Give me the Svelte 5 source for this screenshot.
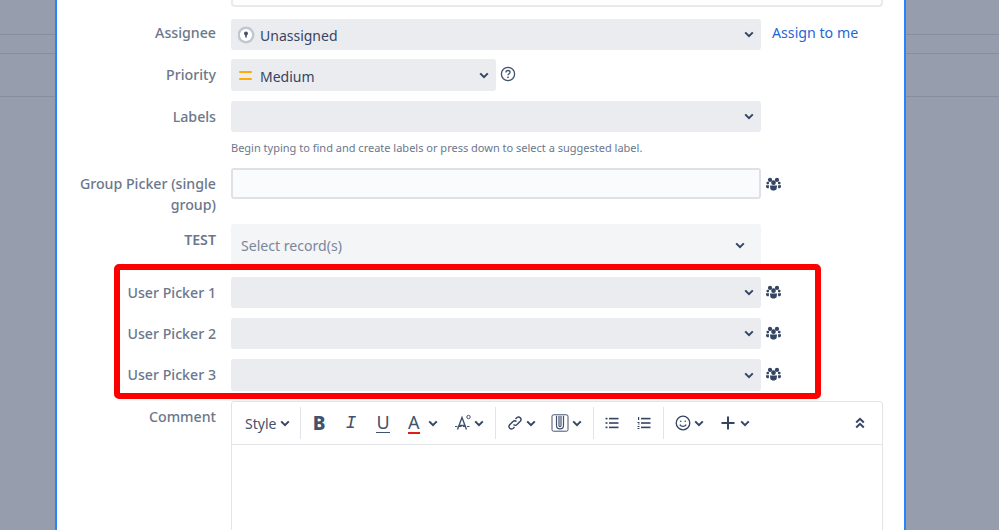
<script>
  const pickers = ["User Picker 1", "User Picker 2", "User Picker 3"];
</script>

{#snippet chevron()}
  <svg class="chev" viewBox="0 0 10 7" width="10" height="7"><path d="M1.200 1.400 5 5.200l3.800-3.800" fill="none" stroke="#344563" stroke-width="2" /></svg>
{/snippet}

{#snippet people()}
  <svg class="people" viewBox="0 0 16 14" width="15" height="14">
    <g fill="#344563">
      <circle cx="4.300" cy="2.600" r="2.300" />
      <circle cx="11.700" cy="2.600" r="2.300" />
      <circle cx="8" cy="5.600" r="2.500" />
      <circle cx="1.900" cy="6" r="1.500" />
      <circle cx="14.100" cy="6" r="1.500" />
      <path d="M0 8.200h3.200l-.2 3.400H1.200C.4 11.400-.1 10.400 0 8.200ZM16 8.200h-3.200l.2 3.400h1.800c.8-.2 1.300-1.200 1.200-3.400ZM4.200 8.700h7.600l-.5 3.600c-.4 1-1.600 1.600-3.300 1.600s-2.900-.6-3.300-1.600Z" />
    </g>
  </svg>
{/snippet}

<div class="backdrop">
  <div class="dialog">
    <div class="top-field"></div>

    <div class="row assignee">
      <div class="label">Assignee</div>
      <div class="field select">
        <svg class="avatar" viewBox="0 0 18 18" width="18" height="18">
          <circle cx="8" cy="9" r="7.300" fill="#fff" stroke="#c1c7d0" stroke-width="2.400" />
          <circle cx="8" cy="7.600" r="2" fill="#42526e" />
          <rect x="7.200" y="8.500" width="1.600" height="3" fill="#42526e" />
        </svg>
        <span>Unassigned</span>
        {@render chevron()}
      </div>
      <a class="assign" href="#assign">Assign to me</a>
    </div>

    <div class="row priority">
      <div class="label">Priority</div>
      <div class="field select narrow">
        <svg class="avatar" viewBox="0 0 18 18" width="18" height="18">
          <rect x="1" y="5" width="13" height="2" rx="1" fill="#ffab00" />
          <rect x="1" y="12" width="13" height="2" rx="1" fill="#ffab00" />
        </svg>
        <span>Medium</span>
        {@render chevron()}
      </div>
      <svg class="help" viewBox="0 0 16 16" width="16" height="16">
        <circle cx="8" cy="8" r="6.600" fill="none" stroke="#42526e" stroke-width="1.300" />
        <path d="M5.900 6.400c0-1.200 1-1.900 2.100-1.900s2.100.7 2.100 1.800c0 1.500-2.100 1.500-2.100 3" fill="none" stroke="#42526e" stroke-width="1.300" />
        <circle cx="8" cy="11.300" r=".9" fill="#42526e" />
      </svg>
    </div>

    <div class="row labels">
      <div class="label">Labels</div>
      <div class="field select">
        {@render chevron()}
      </div>
    </div>

    <div class="description">Begin typing to find and create labels or press down to select a suggested label.</div>

    <div class="row group">
      <div class="label">Group Picker (single group)</div>
      <div class="field input"></div>
      {@render people()}
    </div>

    <div class="row test">
      <div class="label dark">TEST</div>
      <div class="field records">
        <span>Select record(s)</span>
        {@render chevron()}
      </div>
    </div>

    <div class="pickers">
      {#each pickers as name}
        <div class="row picker">
          <div class="label">{name}</div>
          <div class="field select">
            {@render chevron()}
          </div>
          {@render people()}
        </div>
      {/each}
      <div class="highlight"></div>
    </div>

    <div class="row comment">
      <div class="label">Comment</div>
      <div class="editor">
        <div class="toolbar">
          <div class="tool style"><span>Style</span>{@render chevron()}</div>
          <div class="sep"></div>
          <div class="tool t32 first"><span class="glyph bold">B</span></div>
          <div class="tool t32"><span class="glyph ital">I</span></div>
          <div class="tool t32"><span class="glyph under">U</span></div>
          <div class="tool color-tool"><span class="glyph color">A</span>{@render chevron()}</div>
          <div class="tool t52 small">
            <svg viewBox="0 0 20 18" width="20" height="18">
              <path d="M4.500 15.500 9 3.500l4.500 12M6 11.500h6" fill="none" stroke="#42526e" stroke-width="1.400" />
              <path d="M2 12.500h15" stroke="#42526e" stroke-width="1.100" stroke-dasharray="2.500 1.500" />
              <circle cx="15.500" cy="3" r="1.700" fill="none" stroke="#42526e" />
            </svg>
            {@render chevron()}
          </div>
          <div class="sep"></div>
          <div class="tool link">
            <svg viewBox="0 0 18 18" width="18" height="18" fill="none" stroke="#344563" stroke-width="1.400">
              <path d="M7.500 10.500c1 1 2.500 1 3.500 0l3.500-3.500a2.500 2.500 0 0 0-3.500-3.500L9.500 5" />
              <path d="M10.500 7.500c-1-1-2.500-1-3.500 0L3.500 11A2.500 2.500 0 0 0 7 14.500L8.500 13" />
            </svg>
            {@render chevron()}
          </div>
          <div class="tool t52 attach">
            <svg viewBox="0 0 18 18" width="18" height="18" fill="none" stroke="#42526e" stroke-width="1">
              <rect x="1" y=".8" width="16" height="16.400" rx="1.500" />
              <path d="M5.500 2v9.500c0 4.500 7 4.500 7 0V2M8 2v9.500c0 1.500 2 1.500 2 0V2" stroke-width="1.200" />
            </svg>
            {@render chevron()}
          </div>
          <div class="sep"></div>
          <div class="tool t32 first">
            <svg viewBox="0 0 16 16" width="16" height="16" fill="#344563">
              <rect x="1.500" y="2.800" width="2" height="1.600" /><rect x="5" y="2.800" width="9.500" height="1.600" />
              <rect x="1.500" y="7.200" width="2" height="1.600" /><rect x="5" y="7.200" width="9.500" height="1.600" />
              <rect x="1.500" y="11.600" width="2" height="1.600" /><rect x="5" y="11.600" width="9.500" height="1.600" />
            </svg>
          </div>
          <div class="tool t32 numbered">
            <svg viewBox="0 0 16 16" width="16" height="16" fill="#344563">
              <rect x="2" y="2" width="1.200" height="3" /><rect x="1.500" y="7" width="2" height="1" /><rect x="2" y="8.500" width="1.500" height="1" />
              <rect x="1.500" y="11" width="2" height="1" /><rect x="1.500" y="13" width="2" height="1" />
              <rect x="5" y="2.800" width="9.500" height="1.600" /><rect x="5" y="7.200" width="9.500" height="1.600" /><rect x="5" y="11.600" width="9.500" height="1.600" />
            </svg>
          </div>
          <div class="sep"></div>
          <div class="tool smile">
            <svg viewBox="0 0 18 18" width="18" height="18" fill="none" stroke="#344563" stroke-width="1.300">
              <circle cx="9" cy="9" r="6.800" />
              <path d="M5.800 10.600c1.600 2.400 4.800 2.400 6.400 0" />
              <circle cx="6.800" cy="7.200" r=".8" fill="#344563" stroke="none" />
              <circle cx="11.200" cy="7.200" r=".8" fill="#344563" stroke="none" />
            </svg>
            {@render chevron()}
          </div>
          <div class="tool plus">
            <svg viewBox="0 0 16 16" width="16" height="16"><path d="M8 1.500v13M1.500 8h13" stroke="#344563" stroke-width="2" /></svg>
            {@render chevron()}
          </div>
          <svg class="collapse" viewBox="0 0 10 12" width="10" height="12" fill="none" stroke="#344563" stroke-width="2">
            <path d="M1.200 5.400 5 1.800l3.800 3.600M1.200 10.400 5 6.800l3.800 3.600" />
          </svg>
        </div>
      </div>
    </div>
  </div>
</div>

<style>
  :global(body) {
    margin: 0;
  }

  .backdrop {
    height: 530px;
    overflow: hidden;
    background-color: #969eae;
    background-image: linear-gradient(#868e9f, #868e9f), linear-gradient(#868e9f, #868e9f), linear-gradient(#868e9f, #868e9f);
    background-size: 100% 1px;
    background-repeat: no-repeat;
    background-position: 0 34px, 0 53px, 0 96px;
    font-family: "Noto Sans", sans-serif;
    font-size: 14px;
    color: #344563;
  }

  .dialog {
    box-sizing: border-box;
    width: 851px;
    height: 530px;
    margin-left: 55px;
    border: solid #2684ff;
    border-width: 0 2px;
    background: #fff;
    padding-left: 174px;
  }

  .top-field {
    box-sizing: border-box;
    width: 652px;
    height: 7px;
    margin-bottom: 12px;
    border: solid #e9eaee;
    border-width: 0 2px 2px;
    border-radius: 0 0 4px 4px;
  }

  .row {
    display: flex;
    align-items: flex-start;
    height: 31px;
    margin-bottom: 10px;
  }

  .row.assignee {
    margin-bottom: 9px;
  }

  .row.priority {
    height: 32px;
  }

  .row.labels {
    margin-bottom: 9px;
  }

  .label {
    box-sizing: border-box;
    width: 160px;
    margin-left: -160px;
    padding-right: 15px;
    flex: none;
    text-align: right;
    font-size: 14.2px;
    font-weight: 500;
    line-height: 21px;
    margin-top: 5px;
    color: #6b778c;
  }

  .assignee .label {
    margin-top: 2.500px;
  }

  .label.dark {
    font-weight: 600;
  }

  .field {
    box-sizing: border-box;
    flex: none;
    width: 530px;
    height: 100%;
    border-radius: 3px;
    display: flex;
    align-items: center;
  }

  .select {
    background: #ebecf0;
    padding: 0 7px;
  }

  .narrow {
    width: 265px;
  }

  .select span {
    margin-left: 4px;
    margin-top: 3px;
    line-height: 20px;
  }

  .chev {
    margin-left: auto;
    flex: none;
  }

  .avatar {
    flex: none;
  }

  .assign {
    margin-left: 11px;
    margin-top: 3px;
    line-height: 22px;
    font-size: 14.2px;
    color: #1f66d8;
    text-decoration: none;
  }

  .help {
    margin-left: 4px;
    margin-top: 7px;
  }

  .people {
    flex: none;
    margin-left: 5px;
    margin-top: 8px;
  }

  .description {
    margin-top: -2px;
    height: 29px;
    line-height: 18px;
    font-size: 11px;
    color: #6b778c;
  }

  .input {
    background: #fafbfc;
    border: 2px solid #dfe1e6;
  }

  .row.group {
    margin-bottom: 25px;
  }

  .row.group .people {
    margin-top: 9px;
  }

  .row.test {
    height: 42px;
    margin-bottom: 11px;
  }

  .records {
    background: #f4f5f7;
    padding: 0 16px 0 10px;
    font-size: 14.1px;
    color: #7a869a;
  }

  .pickers {
    position: relative;
  }

  .picker:nth-child(3) {
    height: 32px;
  }

  .highlight {
    position: absolute;
    left: -117px;
    top: -13.500px;
    width: 707px;
    height: 135px;
    box-sizing: border-box;
    border: 6px solid #fe0000;
    border-radius: 5px;
    pointer-events: none;
  }

  .row.comment {
    height: auto;
  }

  .editor {
    box-sizing: border-box;
    flex: none;
    width: 652px;
    height: 140px;
    border: 1px solid #e3e4e8;
    border-radius: 3px;
  }

  .toolbar {
    box-sizing: border-box;
    height: 43px;
    display: flex;
    align-items: center;
    padding-left: 13px;
    border-bottom: 1px solid #e3e4e8;
  }

  .tool {
    flex: none;
    box-sizing: border-box;
    display: flex;
    align-items: center;
    color: #42526e;
  }

  .tool .chev {
    margin-left: 4px;
  }

  .style {
    width: 55px;
  }

  .sep {
    width: 1px;
    height: 32px;
    flex: none;
    background: #e3e4e8;
  }

  .t32 {
    width: 32px;
    justify-content: center;
  }

  .first {
    margin-left: 2px;
  }

  .numbered {
    margin-right: 3px;
  }

  .color-tool {
    width: 44px;
    padding-left: 9px;
  }

  .color-tool .chev {
    margin-left: 8px;
  }

  .t52 {
    width: 52px;
    padding-left: 10px;
  }

  .small .chev {
    margin-left: 1px;
  }

  .link {
    width: 45px;
    padding-left: 10px;
  }

  .link .chev {
    margin-left: 2px;
  }

  .attach .chev {
    margin-left: 3px;
  }

  .smile {
    width: 46px;
    padding-left: 10px;
  }

  .smile .chev {
    margin-left: 2px;
  }

  .plus {
    padding-left: 10px;
  }

  .glyph {
    font-size: 18px;
    line-height: 22px;
    color: #42526e;
  }

  .bold {
    font-size: 19px;
    font-weight: 800;
  }

  .ital {
    font-family: "Liberation Mono", monospace;
    font-style: italic;
  }

  .under {
    border-bottom: 1.500px solid #42526e;
    line-height: 19px;
  }

  .color {
    border-bottom: 2.500px solid #e01b1b;
    line-height: 19px;
  }

  .collapse {
    margin-left: auto;
    margin-right: 17px;
  }
</style>
